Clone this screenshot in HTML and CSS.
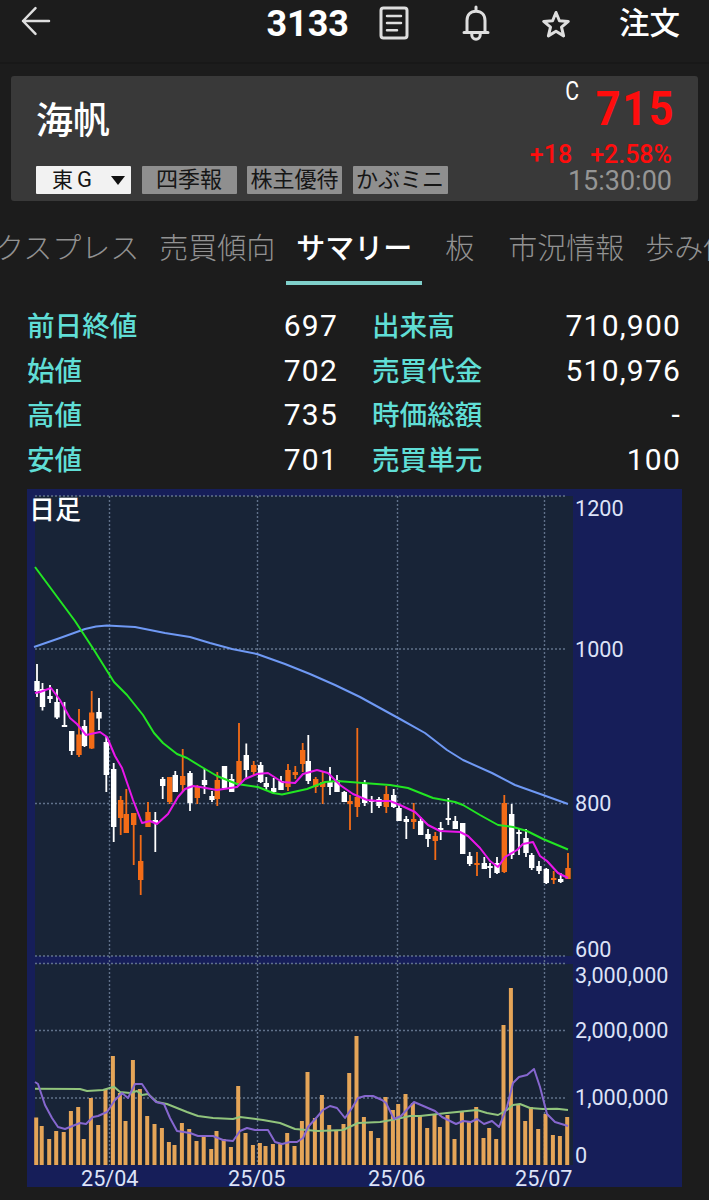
FILE: index.html
```
<!DOCTYPE html>
<html lang="ja">
<head>
    <meta charset="UTF-8">
    <meta name="viewport" content="width=device-width, initial-scale=1.0">
    <title>3133 海帆</title>
    <link rel="stylesheet" href="styles.css">
</head>
<body>
    <header class="topbar">
        <button class="icon-btn back" aria-label="戻る">
            <svg width="32" height="32" viewBox="0 0 32 32"><path d="M29 16H3M15.500 3.200L3 16l12.500 12.800"/></svg>
        </button>
        <h1 class="code">3133</h1>
        <button class="icon-btn note" aria-label="ニュース">
            <svg width="32" height="36" viewBox="0 0 32 36"><rect x="3" y="3" width="26" height="30" rx="2.500"/><path class="thin" d="M9 11h14M9 18h14M9 25.300h10"/></svg>
        </button>
        <button class="icon-btn bell" aria-label="アラート">
            <svg width="30" height="36" viewBox="0 0 30 36"><path d="M15 2v4M6 27V15.500C6 10 9.500 6.300 15 6.300S24 10 24 15.500V27M3 27.500h24M10.800 28.500v1.500a4.200 4.200 0 0 0 8.400 0v-1.500"/></svg>
        </button>
        <button class="icon-btn star" aria-label="お気に入り">
            <svg width="30" height="30" viewBox="0 0 30 30"><path d="M15 3.500l3.400 8.200 8.900.7-6.800 5.800 2.100 8.700L15 22.300l-7.600 4.600 2.100-8.700-6.800-5.800 8.900-.7z"/></svg>
        </button>
        <a class="order">注文</a>
    </header>

    <section class="card">
        <div class="card-left">
            <h2 class="name">海帆</h2>
            <div class="tags">
                <span class="tag market">東<b>G</b><i class="caret"></i></span>
                <span class="tag">四季報</span>
                <span class="tag">株主優待</span>
                <span class="tag">かぶミニ</span>
            </div>
        </div>
        <div class="card-right">
            <div class="price-row"><span class="mark">C</span><span class="price">715</span></div>
            <div class="change"><span>+18</span><span>+2.58%</span></div>
            <div class="time">15:30:00</div>
        </div>
    </section>

    <nav class="tabs">
        <a class="tab first">クスプレス</a>
        <a class="tab">売買傾向</a>
        <a class="tab active">サマリー</a>
        <a class="tab board">板</a>
        <a class="tab">市況情報</a>
        <a class="tab">歩み値</a>
    </nav>

    <section class="summary">
        <dl>
            <div><dt>前日終値</dt><dd>697</dd></div>
            <div><dt>始値</dt><dd>702</dd></div>
            <div><dt>高値</dt><dd>735</dd></div>
            <div><dt>安値</dt><dd>701</dd></div>
        </dl>
        <dl>
            <div><dt>出来高</dt><dd>710,900</dd></div>
            <div><dt>売買代金</dt><dd>510,976</dd></div>
            <div><dt>時価総額</dt><dd>-</dd></div>
            <div><dt>売買単元</dt><dd>100</dd></div>
        </dl>
    </section>

    <svg id="chart" class="chart" viewBox="27 489 655 698" width="655" height="698"></svg>

    <script src="chart.js"></script>
</body>
</html>
```
FILE: styles.css
```
* {
    margin: 0;
    padding: 0;
    box-sizing: border-box;
}

body {
    background-color: #1c1c1c;
    color: #fff;
    font-family: Roboto, "Noto Sans CJK JP", sans-serif;
    width: 709px;
    height: 1200px;
    overflow: hidden;
}

/* top bar */
.topbar {
    display: flex;
    align-items: center;
    height: 64px;
    padding: 0 29px 18px 20px;
    border-bottom: 2px solid #181818;
}

.icon-btn {
    display: flex;
    background: none;
    border: none;
}

.icon-btn svg {
    fill: none;
    stroke: #dedede;
    stroke-width: 3;
    stroke-linecap: round;
    stroke-linejoin: round;
}

.icon-btn .thin {
    stroke-width: 2.5;
}

.back {
    margin-top: -3px;
}

.back svg {
    stroke-width: 2.5;
}

.code {
    margin: 3px 29px 0 auto;
    font-size: 36px;
    font-weight: 700;
}

.note {
    margin-top: 1px;
}

.bell {
    margin: 1px 0 0 51px;
}

.star {
    margin: 3px 0 0 50px;
}

.order {
    margin: 3px 0 0 48px;
    font-size: 30.5px;
    font-weight: 500;
    line-height: 40px;
}

/* stock card */
.card {
    display: flex;
    justify-content: space-between;
    height: 125px;
    margin: 12px 11px 0;
    padding: 0 25px;
    background-color: #393939;
    border-radius: 3px;
}

.name {
    margin-top: 23px;
    font-size: 37px;
    font-weight: 500;
    line-height: 46px;
}

.tags {
    display: flex;
    gap: 10.5px;
    margin-top: 21px;
}

.tag {
    display: flex;
    align-items: center;
    justify-content: center;
    width: 95px;
    height: 28px;
    background-color: #8f8f8f;
    border-radius: 1px;
    color: #161616;
    font-size: 22px;
    line-height: 28px;
    white-space: nowrap;
}

.market {
    justify-content: flex-start;
    padding-left: 16px;
    background-color: #f2f2f2;
    font-size: 21px;
}

.market b {
    margin-left: 4px;
    font-size: 22px;
    font-weight: 400;
}

.caret {
    margin-left: auto;
    margin-right: 6px;
    border: 7px solid transparent;
    border-top: 9px solid #111;
    border-bottom: none;
}

.card-right {
    text-align: right;
}

.price-row {
    display: flex;
    justify-content: flex-end;
    height: 64px;
}

.mark {
    margin: 3px 4px 0 0;
    font-size: 25px;
    line-height: 26px;
    transform: scaleX(0.85);
}

/* narrow digits */
.price {
    font-size: 49px;
    font-weight: 700;
    letter-spacing: 2px;
    margin-right: -2px;
    line-height: 66px;
    color: #ff0d0d;
    transform: scaleX(0.88);
    transform-origin: right;
}

.change {
    display: flex;
    justify-content: flex-end;
    gap: 18px;
    font-size: 25px;
    font-weight: 500;
    line-height: 29px;
    color: #ff0d0d;
    margin-right: 1px;
}

.time {
    margin-right: 1px;
    font-size: 27px;
    line-height: 25px;
    color: #959595;
}

/* tabs */
.tabs {
    display: flex;
    gap: 21px;
    height: 84px;
    overflow: hidden;
    white-space: nowrap;
}

.tab {
    flex: none;
    font-size: 29px;
    font-weight: 300;
    line-height: 97px;
    color: #929292;
}

.first {
    margin-left: -5px;
    margin-right: -1px;
}

.active {
    width: 136px;
    margin: 0 -9px 0 -10px;
    border-bottom: 4px solid #7fcfca;
    color: #fff;
    font-weight: 500;
    text-align: center;
}

.board {
    margin: 0 13px 0 11px;
}

/* summary figures */
.summary {
    display: flex;
    gap: 35px;
    margin: 18px 29px 0 27px;
}

.summary dl:first-child {
    width: 310px;
}

.summary dl:last-child {
    flex: 1;
}

.summary dl div {
    display: flex;
    justify-content: space-between;
    height: 44.5px;
    line-height: 45px;
}

dt {
    padding-top: 1px;
    color: #60ded6;
    font-size: 27.6px;
    font-weight: 500;
}

dd {
    margin-right: -1px;
    font-size: 30px;
    letter-spacing: 1.2px;
}

/* chart */
.chart {
    display: block;
    margin: 8px 0 0 27px;
    background-color: #161e59;
}

.plot {
    fill: #182437;
}

.grid {
    stroke: #60718a;
    stroke-width: 1.4;
    stroke-dasharray: 2 2;
}

.axis {
    fill: #dde3f7;
    font-size: 21.6px;
}

.chart-title {
    fill: #fff;
    font-size: 26px;
    font-weight: 500;
}

.up {
    fill: #f36c17;
}

.down {
    fill: #fff;
}

.volume {
    fill: #e5a558;
}

.line {
    fill: none;
    stroke-width: 2;
    stroke-linejoin: round;
}

.ma5 { stroke: #ea16ea; }
.ma25 { stroke: #22e622; }
.ma75 { stroke: #6f99f4; }
.vol5 { stroke: #8667cf; }
.vol25 { stroke: #91c47c; }
```
FILE: chart.js
```
const chart = document.getElementById('chart');

// x, high, body top, body bottom, low, volume top, up (1) or down (0)
const candles = [
    [37, 664, 681, 691, 697, 1117.5, 0], [42.5, 683, 689, 707, 710.5, 1126, 0],
    [50, 685, 696, 699, 703, 1139, 0], [57, 689, 702, 717.5, 719, 1131, 0],
    [64.5, 702, 725, 727, 727, 1132, 0], [71.7, 731, 731, 751, 755, 1111, 0],
    [79, 709, 734.5, 755, 757, 1107, 1], [84.5, 720, 726, 746, 747, 1139, 0],
    [91.7, 691, 712.5, 748.5, 749, 1098, 1], [99, 698, 712, 718.5, 730, 1125, 0],
    [106.3, 737, 742, 775, 792, 1089, 0], [113.7, 763, 769, 827, 842, 1056, 0],
    [120.7, 796, 800, 818, 835, 1093, 1], [126.3, 789, 814, 833, 833, 1121, 1],
    [133.7, 813, 813, 825, 865, 1060, 1], [140.7, 835, 861, 880, 895, 1089, 1],
    [148, 802, 812, 827, 827, 1116, 1], [155.3, 812, 820, 823, 852, 1124, 0],
    [162.7, 777, 779, 786, 799, 1128, 0], [169.7, 777, 777, 802, 804, 1142, 1],
    [175.3, 771, 775, 792, 792, 1145, 0], [182.7, 749, 776, 785, 792, 1123, 1],
    [190, 771, 773, 803, 811, 1129, 0], [197.3, 785, 787, 798, 804, 1141, 1],
    [204.5, 769, 780, 785, 794, 1137, 0], [212, 791, 796, 800, 802, 1149, 0],
    [217.3, 772, 780, 799, 806, 1131, 1], [224.5, 766, 766, 788, 788, 1139, 0],
    [231.7, 774, 779, 792, 792, 1147, 0], [239, 723, 761, 784, 785, 1086, 1],
    [246.3, 743.5, 755, 770, 779, 1133, 0], [253.7, 761, 765, 772, 775, 1145, 1],
    [260.7, 762, 765, 782, 783, 1143, 0], [266.3, 777, 783, 787, 790, 1146, 0],
    [273.7, 778, 788, 792, 794, 1144, 0], [281, 776, 781, 790, 790, 1144, 0],
    [288, 764, 770, 787, 791, 1133, 1], [295.3, 766, 772, 775, 779, 1146, 1],
    [302.7, 743, 750, 764, 772, 1121, 1], [308.3, 735, 761, 781, 784, 1072, 0],
    [315.7, 777, 779, 787, 793, 1118, 1], [322.7, 771, 782, 787, 804, 1095, 1],
    [330, 767, 781, 787, 795, 1125, 0], [337, 775, 780, 792, 792, 1131, 0],
    [344.3, 791, 792, 802, 802, 1124, 0], [350, 795, 801, 804, 830, 1073, 1],
    [357.3, 728, 797, 807, 817, 1036, 1], [364.7, 780, 784, 803, 806, 1117, 0],
    [371.7, 796, 800, 802, 813, 1131, 0], [379, 797, 799, 806, 808, 1138, 0],
    [386.3, 786, 794, 807, 813, 1097, 1], [393.7, 789, 795, 807, 808, 1110, 0],
    [399, 804, 808, 821, 821, 1104, 0], [406.3, 816, 819, 822, 839, 1094, 0],
    [413.7, 803, 819, 822, 829, 1103, 1], [420.7, 817, 821, 835, 835, 1116, 0],
    [428, 829, 834, 839, 847, 1128, 0], [435.3, 832, 836, 841, 860, 1114, 1],
    [440.7, 822, 828, 830, 840, 1127, 0], [448.3, 798, 818, 820, 825, 1115, 0],
    [455.3, 816, 821, 829, 829, 1139, 0], [462.7, 823, 823, 854, 854, 1111, 0],
    [469.7, 852, 856, 864, 866, 1122, 0], [477, 852, 863, 865, 876, 1107, 1],
    [484.3, 857, 863, 869, 869, 1138, 0], [490, 863, 866, 868, 878, 1128, 0],
    [497, 857, 863, 873, 874, 1139, 0], [504.3, 795, 803, 872, 873, 1025, 1],
    [511.7, 804, 814, 855, 859, 988, 0], [519, 828, 832, 834, 855, 1104, 0],
    [526, 829, 838, 853, 857, 1121, 0], [531.7, 853, 855, 868, 870, 1107, 0],
    [539, 861, 866, 871, 874, 1129, 0], [546.3, 868, 869, 883, 884, 1114, 0],
    [553.7, 871, 878, 880, 884, 1135, 1], [560.7, 873, 879, 882, 883, 1136, 0],
    [568, 853, 868, 879, 879, 1117, 1]
];

const lines = {
    ma75: '34,647 60,638 85,629 96,626.500 107,625.500 135,627 165,633 190,637 210,643 232,649 257,654 285,664 310,674 335,685 360,697 380,708 400,719 425,733 447,750 463,760 492,773 515,785 543,795 568,804',
    ma25: '35,567 55,594 75,621 94,650 109,674 114,682 127,695 143,715 154,733 163,743 177,754 187,758 200,766 217,776 237,784 258,787 273,793 282,794.500 307,789 325,782 337,781 363,783 390,785 408,788 433,798 455,802 463,805 480,815 498,825 513,827 527,831 543,839 568,849.500',
    ma5: '35,693 40,692 51,688 60,700 70,718 77,724 86,735 100,732 107,737 115,756 122,768 133,800 142,823 150,821 157,824 168,814 178,797 185,789 193,786 200,787 217,790 237,787 245,779 257,774 268,773 282,782 295,783 303,774 317,770 328,773 340,785 353,794 367,800 378,801 390,801 400,805 415,812 428,825 440,831 460,832 468,836 480,848 490,861 498,867 505,857 517,850 523,844 533,842 540,856 547,861 558,873 568,878',
    vol25: '35,1088.700 80,1089 87,1091 103,1090 114,1086.700 120,1092 130,1093 137,1091 142,1095 148,1094 157,1102 167,1104 187,1112 198,1116 213,1118 233,1119 240,1117 263,1120 280,1123 295,1129 318,1131 343,1130 358,1123 380,1122 393,1119.700 410,1116 420,1116 447,1113 477,1110 487,1113 498,1115 507,1110 513,1105 520,1104 530,1108 543,1109 557,1108.700 568,1110',
    vol5: '35,1082 38,1084 45,1105 52,1118 58,1127 65,1129 80,1123 86,1124 93,1117 98,1116 107,1112 115,1100 122,1093 128,1098 135,1084 142,1084 150,1096 156,1102 164,1104 170,1118 177,1131 190,1133 198,1136 213,1136 223,1140 233,1141 240,1131 247,1128 255,1130 268,1130 275,1142 282,1144 290,1142 297,1142 303,1138 308,1127 317,1117 323,1110 330,1106 337,1108 345,1118 352,1108 358,1098 365,1096 373,1096 382,1100 386,1103 394,1119 401,1116 414,1102 435,1111 442,1117 456,1124 463,1121 471,1122 477,1119 484,1124 492,1121 499,1127 507,1107 513,1083 519,1077 527,1075 534,1069 540,1087 547,1114 555,1122 568,1126'
};

const priceLabels = [['1200', 516], ['1000', 657], ['800', 811], ['600', 957],
    ['3,000,000', 983], ['2,000,000', 1038], ['1,000,000', 1105], ['0', 1163]];
const monthLabels = [['25/04', 81], ['25/05', 228], ['25/06', 368], ['25/07', 515]];

const rect = (cls, x, y, w, h) => `<rect class="${cls}" x="${x}" y="${y}" width="${w}" height="${h}"/>`;
const grid = (x1, y1, x2, y2) => `<line class="grid" x1="${x1}" y1="${y1}" x2="${x2}" y2="${y2}"/>`;
const polyline = name => `<polyline class="line ${name}" points="${lines[name]}"/>`;

let svg = rect('plot', 35, 496, 538, 460) + rect('plot', 35, 964, 538, 201);

[496, 649, 803.5, 956, 963.5, 1030.5, 1098].forEach(y => svg += grid(35, y, 565, y));
[109.5, 257.5, 397.5, 544.5].forEach(x => svg += grid(x, 496, x, 1165));

candles.forEach(([x, high, top, bottom, low, vol, up]) => {
    const cls = up ? 'up' : 'down';
    svg += rect(cls, x - 0.9, high, 1.8, low - high);
    svg += rect(cls, x - 2.7, top, 5.4, bottom - top);
    svg += rect('volume', x - 2.8, vol, 4, 1165 - vol);
});

svg += Object.keys(lines).map(polyline).join('');

priceLabels.forEach(([text, y]) => svg += `<text class="axis" x="575" y="${y}">${text}</text>`);
monthLabels.forEach(([text, x]) => svg += `<text class="axis" x="${x}" y="1185.5">${text}</text>`);
svg += '<text class="chart-title" x="29" y="519">日足</text>';

chart.innerHTML = svg;
```
